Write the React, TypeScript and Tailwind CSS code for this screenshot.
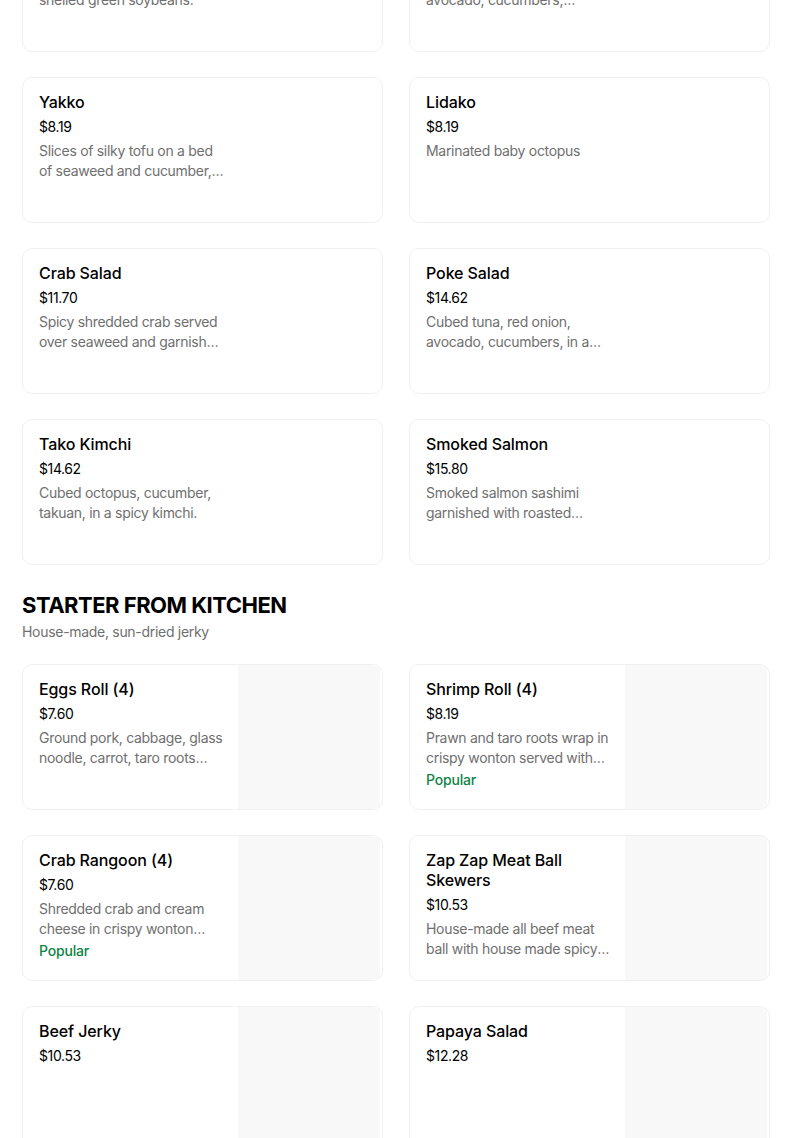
import React from 'react';

type Item = {
    name: string;
    price: string;
    desc?: string;
    popular?: boolean;
    image?: boolean;
};

const sushiBar: Item[] = [
    { name: 'Edamame', price: '$6.43', desc: 'Boiled and lightly salted shelled green soybeans.' },
    { name: 'Salmon Salad', price: '$14.62', desc: 'Cubed salmon, red onion, avocado, cucumbers, jalapeños in a spicy sauce.' },
    { name: 'Yakko', price: '$8.19', desc: 'Slices of silky tofu on a bed of seaweed and cucumber, topped with bonito flakes.' },
    { name: 'Lidako', price: '$8.19', desc: 'Marinated baby octopus' },
    { name: 'Crab Salad', price: '$11.70', desc: 'Spicy shredded crab served over seaweed and garnished with tobiko.' },
    { name: 'Poke Salad', price: '$14.62', desc: 'Cubed tuna, red onion, avocado, cucumbers, in a poke sauce.' },
    { name: 'Tako Kimchi', price: '$14.62', desc: 'Cubed octopus, cucumber, takuan, in a spicy kimchi.' },
    { name: 'Smoked Salmon', price: '$15.80', desc: 'Smoked salmon sashimi garnished with roasted jalapeños and ponzu.' },
];

const kitchen: Item[] = [
    { name: 'Eggs Roll (4)', price: '$7.60', desc: 'Ground pork, cabbage, glass noodle, carrot, taro roots wrapped and fried.', image: true },
    { name: 'Shrimp Roll (4)', price: '$8.19', desc: 'Prawn and taro roots wrap in crispy wonton served with sweet chili sauce.', popular: true, image: true },
    { name: 'Crab Rangoon (4)', price: '$7.60', desc: 'Shredded crab and cream cheese in crispy wonton wrapper.', popular: true, image: true },
    { name: 'Zap Zap Meat Ball Skewers', price: '$10.53', desc: 'House-made all beef meat ball with house made spicy sauce.', image: true },
    { name: 'Beef Jerky', price: '$10.53', image: true },
    { name: 'Papaya Salad', price: '$12.28', image: true },
];

const MenuCard: React.FC<{ item: Item }> = ({ item }) => (
    <div className="h-[146px] flex rounded-[10px] border border-[#f0f0f0] bg-white overflow-hidden">
        <div className="w-[215px] shrink-0 pl-[16px] pr-[12px] pt-[14px]">
            <div className="text-[16px] leading-[20px] font-medium tracking-[-0.1px] text-black">{item.name}</div>
            <div className="mt-[5px] text-[14px] leading-[20px] tracking-[-0.4px] text-black">{item.price}</div>
            {item.desc && (
                <div className="mt-[4px] h-[40px] text-[14px] leading-[20px] tracking-[-0.3px] text-[#6f6f6f] line-clamp-2">{item.desc}</div>
            )}
            {item.popular && (
                <div className="mt-[2px] text-[14px] leading-[20px] font-medium tracking-[-0.2px] text-[#0e8345]">Popular</div>
            )}
        </div>
        {item.image && <div className="flex-1 bg-[#f8f8f8] mr-[2px]" />}
    </div>
);

export default function App() {
    return (
        <div className="h-[1138px] overflow-hidden bg-white" style={{ fontFamily: 'Inter, "Noto Sans", sans-serif' }}>
            <div className="-mt-[94px] ml-[22px] w-[748px]">
                <div className="grid grid-cols-2 gap-x-[26px] gap-y-[25px]">
                    {sushiBar.map((item) => (
                        <MenuCard key={item.name} item={item} />
                    ))}
                </div>
                <div className="mt-[26px]">
                    <h2 className="text-[22px] leading-[28px] font-bold tracking-[-0.5px] text-black">STARTER FROM KITCHEN</h2>
                    <p className="mt-[3px] text-[14px] leading-[20px] tracking-[-0.3px] text-[#6f6f6f]">House-made, sun-dried jerky</p>
                </div>
                <div className="mt-[22px] grid grid-cols-2 gap-x-[26px] gap-y-[25px]">
                    {kitchen.map((item) => (
                        <MenuCard key={item.name} item={item} />
                    ))}
                </div>
            </div>
        </div>
    );
}
